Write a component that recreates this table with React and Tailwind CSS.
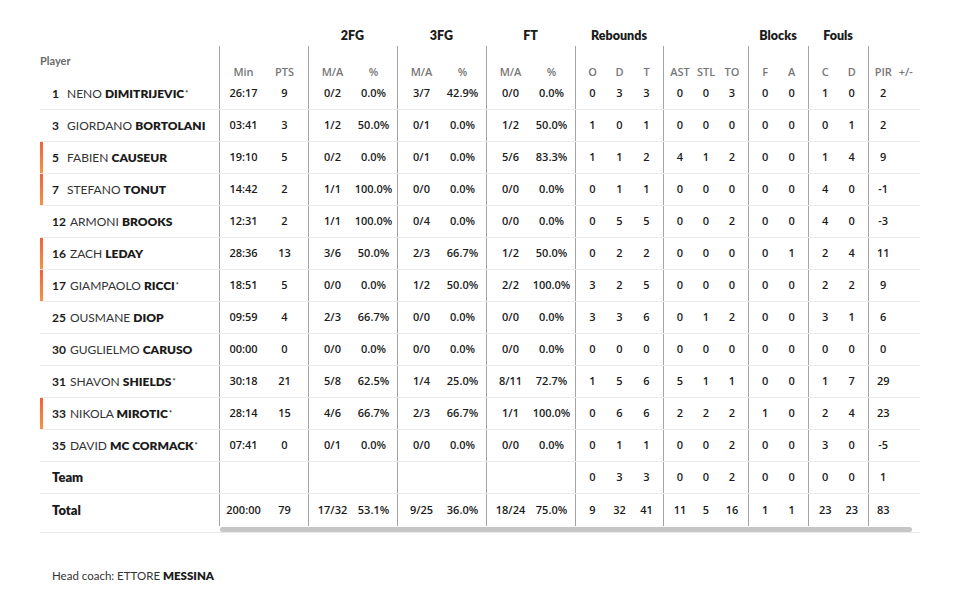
import React from 'react';

const groups = [
    { title: '', w: 'w-[89px]', cols: ['Min', 'PTS'] },
    { title: '2FG', w: 'w-[89px]', cols: ['M/A', '%'] },
    { title: '3FG', w: 'w-[89px]', cols: ['M/A', '%'] },
    { title: 'FT', w: 'w-[89px]', cols: ['M/A', '%'] },
    { title: 'Rebounds', w: 'w-[88px]', cols: ['O', 'D', 'T'] },
    { title: '', w: 'w-[85px]', cols: ['AST', 'STL', 'TO'] },
    { title: 'Blocks', w: 'w-[60px]', cols: ['F', 'A'] },
    { title: 'Fouls', w: 'w-[60px]', cols: ['C', 'D'] },
    { title: '', w: 'w-[52px]', cols: ['PIR', '+/-'] },
];

// num, first, last, starter, on court, stats per group
const players = [
    ['1', 'NENO', 'DIMITRIJEVIC', true, false, [['26:17', '9'], ['0/2', '0.0%'], ['3/7', '42.9%'], ['0/0', '0.0%'], ['0', '3', '3'], ['0', '0', '3'], ['0', '0'], ['1', '0'], ['2', '']]],
    ['3', 'GIORDANO', 'BORTOLANI', false, false, [['03:41', '3'], ['1/2', '50.0%'], ['0/1', '0.0%'], ['1/2', '50.0%'], ['1', '0', '1'], ['0', '0', '0'], ['0', '0'], ['0', '1'], ['2', '']]],
    ['5', 'FABIEN', 'CAUSEUR', false, true, [['19:10', '5'], ['0/2', '0.0%'], ['0/1', '0.0%'], ['5/6', '83.3%'], ['1', '1', '2'], ['4', '1', '2'], ['0', '0'], ['1', '4'], ['9', '']]],
    ['7', 'STEFANO', 'TONUT', false, true, [['14:42', '2'], ['1/1', '100.0%'], ['0/0', '0.0%'], ['0/0', '0.0%'], ['0', '1', '1'], ['0', '0', '0'], ['0', '0'], ['4', '0'], ['-1', '']]],
    ['12', 'ARMONI', 'BROOKS', false, false, [['12:31', '2'], ['1/1', '100.0%'], ['0/4', '0.0%'], ['0/0', '0.0%'], ['0', '5', '5'], ['0', '0', '2'], ['0', '0'], ['4', '0'], ['-3', '']]],
    ['16', 'ZACH', 'LEDAY', false, true, [['28:36', '13'], ['3/6', '50.0%'], ['2/3', '66.7%'], ['1/2', '50.0%'], ['0', '2', '2'], ['0', '0', '0'], ['0', '1'], ['2', '4'], ['11', '']]],
    ['17', 'GIAMPAOLO', 'RICCI', true, true, [['18:51', '5'], ['0/0', '0.0%'], ['1/2', '50.0%'], ['2/2', '100.0%'], ['3', '2', '5'], ['0', '0', '0'], ['0', '0'], ['2', '2'], ['9', '']]],
    ['25', 'OUSMANE', 'DIOP', false, false, [['09:59', '4'], ['2/3', '66.7%'], ['0/0', '0.0%'], ['0/0', '0.0%'], ['3', '3', '6'], ['0', '1', '2'], ['0', '0'], ['3', '1'], ['6', '']]],
    ['30', 'GUGLIELMO', 'CARUSO', false, false, [['00:00', '0'], ['0/0', '0.0%'], ['0/0', '0.0%'], ['0/0', '0.0%'], ['0', '0', '0'], ['0', '0', '0'], ['0', '0'], ['0', '0'], ['0', '']]],
    ['31', 'SHAVON', 'SHIELDS', true, false, [['30:18', '21'], ['5/8', '62.5%'], ['1/4', '25.0%'], ['8/11', '72.7%'], ['1', '5', '6'], ['5', '1', '1'], ['0', '0'], ['1', '7'], ['29', '']]],
    ['33', 'NIKOLA', 'MIROTIC', true, true, [['28:14', '15'], ['4/6', '66.7%'], ['2/3', '66.7%'], ['1/1', '100.0%'], ['0', '6', '6'], ['2', '2', '2'], ['1', '0'], ['2', '4'], ['23', '']]],
    ['35', 'DAVID', 'MC CORMACK', true, false, [['07:41', '0'], ['0/1', '0.0%'], ['0/0', '0.0%'], ['0/0', '0.0%'], ['0', '1', '1'], ['0', '0', '2'], ['0', '0'], ['3', '0'], ['-5', '']]],
];

const team = [['', ''], ['', ''], ['', ''], ['', ''], ['0', '3', '3'], ['0', '0', '2'], ['0', '0'], ['0', '0'], ['1', '']];
const total = [['200:00', '79'], ['17/32', '53.1%'], ['9/25', '36.0%'], ['18/24', '75.0%'], ['9', '32', '41'], ['11', '5', '16'], ['1', '1'], ['23', '23'], ['83', '']];

function StatRow({ stats, last }) {
    return (
        <div className={`flex h-[32px] ${last ? '' : 'border-b border-[#ebebeb]'}`}>
            {groups.map((g, gi) => (
                <div key={gi} className={`${g.w} flex border-l border-[#a3a3a3] px-[3px]`}>
                    {stats[gi].map((v, ci) => (
                        <div key={ci} className="flex-1 flex items-center justify-center">
                            {v}
                        </div>
                    ))}
                </div>
            ))}
        </div>
    );
}

export default function App() {
    return (
        <div className="w-[956px] min-h-[594px] bg-white pl-[40px] pr-[36px] text-[#1b1b1b] font-['Lato',sans-serif]">
            <div className="flex border-b border-[#ebebeb]">
                {/* Player column */}
                <div className="w-[179px] shrink-0">
                    <div className="h-[78px] pt-[54px] text-[11px] leading-[14px] font-bold text-[#6b6b6b]">Player</div>
                    {players.map((p) => (
                        <div key={p[0]} className="flex h-[32px] border-b border-[#ebebeb]">
                            <div className={`w-[3px] shrink-0 ${p[4] ? 'bg-gradient-to-b from-[#f0603a] to-[#f7923d]' : ''}`}></div>
                            <div className="flex items-center pl-[9px] text-[12px] whitespace-nowrap">
                                <span className="min-w-[11px] mr-[4px] font-bold">{p[0]}</span>
                                <span className="text-[#333]">{p[1]}&nbsp;</span>
                                <span className="font-extrabold">{p[2]}</span>
                                {p[3] && <span className="text-[7px] self-start mt-[10px] ml-[1px] font-bold">*</span>}
                            </div>
                        </div>
                    ))}
                    <div className="h-[32px] flex items-center pl-[12px] text-[13px] font-extrabold border-b border-[#ebebeb]">Team</div>
                    <div className="h-[38px] pt-[7px] pl-[12px] text-[13px] font-extrabold">Total</div>
                </div>

                {/* Stats area */}
                <div className="flex-1 font-['Open_Sans',sans-serif] text-[11px] font-semibold">
                    <div className="flex h-[46px] font-['Lato',sans-serif]">
                        {groups.map((g, gi) => (
                            <div key={gi} className={`${g.w} flex items-end justify-center text-[12.5px] font-extrabold`}>
                                {g.title}
                            </div>
                        ))}
                    </div>
                    <div className="flex h-[32px] text-[#777]">
                        {groups.map((g, gi) => (
                            <div key={gi} className={`${g.w} flex border-l border-[#a3a3a3] px-[3px]`}>
                                {g.cols.map((c) => (
                                    <div key={c} className="flex-1 flex items-end justify-center leading-[12px]">
                                        {c}
                                    </div>
                                ))}
                            </div>
                        ))}
                    </div>
                    {players.map((p) => (
                        <StatRow key={p[0]} stats={p[5]} />
                    ))}
                    <StatRow stats={team} />
                    <StatRow stats={total} last />
                    <div className="h-[6px] pl-[1px] pr-[8px] pt-[1px]">
                        <div className="h-[5px] rounded-full bg-[#c6c6c6]"></div>
                    </div>
                </div>
            </div>

            <div className="mt-[34px] pl-[12px] text-[11.5px] text-[#333]">
                Head coach: ETTORE <span className="font-extrabold text-[#1b1b1b]">MESSINA</span>
            </div>
        </div>
    );
}
